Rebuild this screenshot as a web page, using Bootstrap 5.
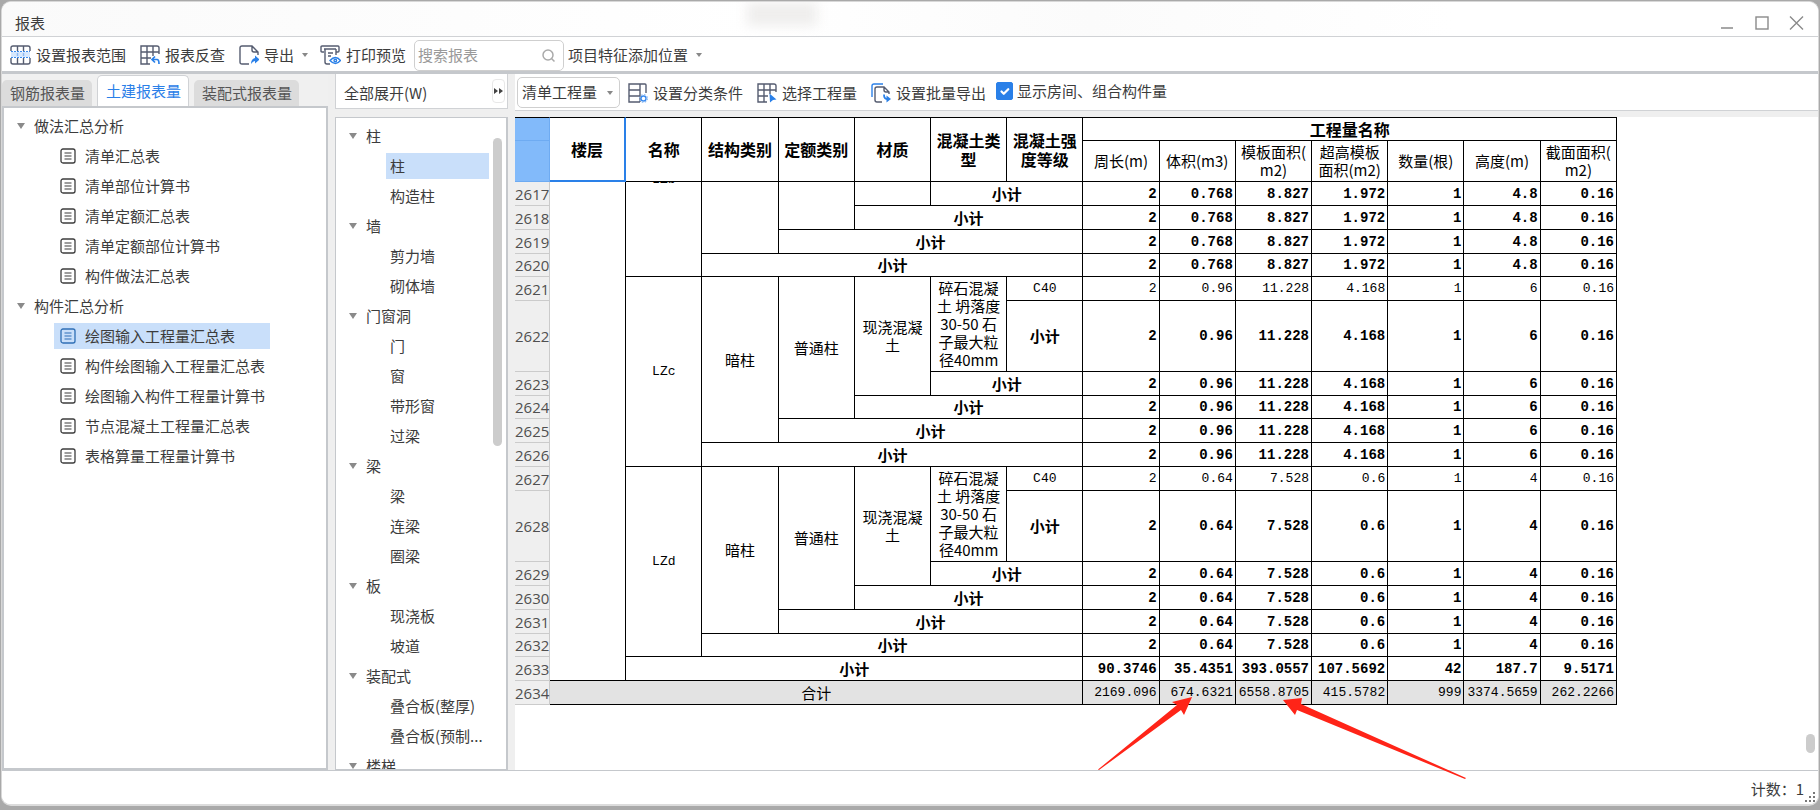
<!DOCTYPE html>
<html lang="zh-CN">
<head>
<meta charset="utf-8">
<meta name="viewport" content="width=device-width, initial-scale=1">
<title>报表</title>
<link href="https://cdn.jsdelivr.net/npm/bootstrap@5.3.0/dist/css/bootstrap.min.css" rel="stylesheet">
<style>
:root { --line:#d0d2d5; --edge:#c5c8cc; --ink:#3c3c3c; --accent:#2a80e8; --pick:#c9dffa; }
body { font-family:"Noto Sans CJK SC",sans-serif; font-size:15px; line-height:20px; color:var(--ink); background:#a9a9a9; }
svg { display:block; flex:none; }
a { color:inherit; text-decoration:none; }
.desktop { height:100vh; padding:1px 1px 4px; }
.app-window { border-radius:10px; border:1px solid #d8d8d8; border-bottom:2px solid #dcdcdc; background:#fff; overflow:hidden; }
.title-bar { height:35px; padding:8px 13px 0 13px; background:linear-gradient(90deg,#fafafa,#fff 42%,#fbfbfb 60%,#fff 80%); border-bottom:1px solid var(--line); position:relative; }
.title-haze { position:absolute; left:41%; top:0; width:70px; height:24px; background:#efeeed; filter:blur(6px); }
.win-btns { gap:19px; }
.tool { border:0; background:none; padding:0; color:inherit; display:flex; align-items:center; white-space:nowrap; }
.tool svg { margin-right:5px; }
.main-tools { height:37px; padding:2px 0 0 8px; border-bottom:3px solid var(--edge); }
.gap-tool { margin-left:14px; }
.search-box { width:150px; height:31px; border:1px solid #cfcfcf; border-radius:5px; padding:0 7px 0 3px; }
.search-box input { border:0; outline:0; min-width:0; width:100%; padding:0; color:#999; background:none; }
.search-box input::placeholder { color:#999; }
.caret { width:0; height:0; border:3px solid transparent; border-top:4px solid #888; border-bottom:0; flex:none; }
.work { background:#efefef; min-height:0; }
.side { width:326px; flex:none; }
.tabs { height:32px; gap:5px; background:#f0f0f0; }
.tabs button { border:0; background:#dcdcdc; color:#555; height:26px; padding:0 7px 0 8px; border-radius:5px 5px 0 0; white-space:nowrap; line-height:24px; }
.tabs button.on { background:#fff; color:var(--accent); height:31px; border:1px solid var(--line); border-bottom:0; line-height:30px; }
.tree-box { background:#fff; border:2px solid var(--edge); min-height:0; overflow:hidden; }
.tree { list-style:none; margin:0; padding:1px 0 0; }
.tree ul { list-style:none; margin:0; padding:0; }
.tree a { display:flex; align-items:center; height:26px; margin:4px 0; white-space:nowrap; }
.tree .branch { padding-left:13px; gap:9px; }
.branch::before { content:""; border:4px solid transparent; border-top:6px solid #8a8a8a; border-bottom:0; }
.side .leaf { margin-left:50px; padding:0 5px 0 6px; gap:9px; width:216px; }
.kinds { width:173px; margin:0 7px; flex:none; }
.kinds .leaf { margin-left:50px; padding-left:4px; width:103px; }
.leaf.on { background:var(--pick); }
.expand-box { height:35px; background:#fff; border:1px solid var(--line); border-top:0; padding:0 2px 0 8px; }
.more-btn { width:13px; height:24px; border:1px solid #e8e8e8; border-radius:4px; background:#fff; padding:0; }
.kinds .tree-box { margin-top:8px; border-width:1px 2px 1px 1px; position:relative; }
.thumb { position:absolute; width:9px; border-radius:5px; background:#ccc; }
.right-tools { height:37px; background:#fff; border-bottom:1px solid var(--line); padding-left:2px; }
.right-tools .tool { padding-top:2px; }
.scheme { width:103px; height:31px; border:1px solid #cfcfcf; border-radius:5px; padding:0 4px; appearance:none; color:inherit; background:#fff; }
.pick-wrap { position:relative; }
.pick-wrap .caret { position:absolute; right:7px; top:14px; pointer-events:none; }
.show-opt { gap:4px; margin-left:10px; padding-bottom:2px; white-space:nowrap; }
.show-opt .form-check-input { width:17px; height:18px; margin:0; border-radius:2px; }
.form-check-input:checked { background-color:var(--accent); border-color:var(--accent); }
.sheet { background:#fff; margin-top:6px; position:relative; min-height:0; }
.report { table-layout:fixed; width:1102px; border-collapse:separate; border-spacing:0; color:#000; line-height:18px; }
.report th, .report td { border:solid #000; border-width:0 1px 1px 0; padding:0 2px; text-align:center; vertical-align:middle; white-space:nowrap; height:24px; font-weight:400; }
.report thead tr:first-child th { border-top:1px solid #000; }
.report thead .big { font-size:16px; font-weight:700; line-height:19px; }
.report tr.sub-head th { height:41px; }
.report tbody .no { font-family:"Open Sans",sans-serif; background:#efefef; color:#505050; border-color:#cbcbcb; padding:0; line-height:20px; }
.report thead .corner { background:#82bafa; border-color:#6eabf2; border-top-color:#6eabf2; padding:0; }
.report .active-cell { border-right:2px solid var(--accent); border-bottom:2px solid var(--accent); }
.report .n { text-align:right; font-family:"Liberation Mono",monospace; font-size:13px; }
.report .s .n { font-weight:700; font-size:14px; }
.report .st { font-weight:700; }
.report .code { font-family:"Liberation Mono",monospace; font-size:13px; }
.report tbody tr:nth-child(4n) > * { height:23px; }
.report tbody tr.tall > * { height:71px; }
.report .total > td { background:#e3e3e3; }
.cut { height:3px; line-height:10px; }
.arrows { position:absolute; left:582px; top:579px; z-index:2; pointer-events:none; }
.status-bar { height:34px; border-top:1px solid var(--edge); padding:2px 14px 0; background:#fff; position:relative; }
.grip { position:absolute; right:2px; bottom:1px; }
</style>
</head>
<body>
<svg width="0" height="0" class="position-absolute" aria-hidden="true">
  <symbol id="doc" viewBox="0 0 16 16"><rect x="1" y="1" width="14" height="14" rx="2" fill="none" stroke="currentColor" stroke-width="1.3"/><path d="M4.5 5h7M4.5 8h7M4.5 11h7" stroke="currentColor" stroke-width="1.2"/></symbol>
</svg>
<div class="desktop">
<div class="app-window d-flex flex-column h-100">
  <header class="title-bar d-flex justify-content-between align-items-center flex-shrink-0">
    <div class="title-haze"></div>
    <span>报表</span>
    <div class="win-btns d-flex align-items-center">
      <button class="tool" aria-label="最小化"><svg class="m-0" width="16" height="16" stroke="#8a8a8a" stroke-width="1.4"><path d="M2 13h12"/></svg></button>
      <button class="tool" aria-label="最大化"><svg class="m-0" width="16" height="16" stroke="#8a8a8a" stroke-width="1.4" fill="none"><rect x="2" y="2" width="12" height="12"/></svg></button>
      <button class="tool" aria-label="关闭"><svg class="m-0" width="16" height="16" stroke="#8a8a8a" stroke-width="1.4"><path d="M1 1.500l13 13M14 1.500l-13 13"/></svg></button>
    </div>
  </header>

  <nav class="main-tools d-flex align-items-center flex-shrink-0">
    <button class="tool"><svg width="21" height="20" fill="none" stroke="#555c70" stroke-width="1.4"><path d="M1 6V3q0-2 2-2h15q2 0 2 2v3M1 13v4q0 2 2 2h15q2 0 2-2v-4M7.500 1v5M13.500 1v5M7.500 13v6M13.500 13v6"/><rect x="1" y="7" width="19" height="5" fill="#d7e8fd" stroke="none"/><path d="M1 6.500h19M1 12.500h19" stroke="#3b8cf0" stroke-width="1" stroke-dasharray="2 1"/><path d="M7.500 8v3M13.500 8v3" stroke="#8bb9f3"/></svg>设置报表范围</button>
    <button class="tool gap-tool"><svg width="20" height="20" fill="none" stroke="#555c70" stroke-width="1.4"><path d="M19 9V3q0-2-2-2H1v18h9M7 1v18M13 1v10M1 7h18M1 13h10"/><path d="M12 14.500h5q2 0 2 4.500M15 11.500l-3 3 3 3" stroke="#2a80e8" stroke-width="1.7"/></svg>报表反查</button>
    <button class="tool gap-tool"><svg width="20" height="20" fill="none" stroke="#555c70" stroke-width="1.4"><path d="M10 19H3q-2 0-2-2V3q0-2 2-2h10l6 6v3M13 1v4q0 2 2 2h4"/><path d="M12 19q0-5 4-6v-2.500l4.500 4-4.500 4V16q-2 0-4 3" fill="#2a80e8" stroke="none"/></svg>导出<span class="caret mx-2 ms-2"></span></button>
    <button class="tool ms-1"><svg width="21" height="20" fill="none" stroke="#555c70" stroke-width="1.4"><path d="M4 7H2q-1 0-1-1V2q0-1 1-1h16q1 0 1 1v4q0 1-1 1h-2M4 4h12M5 4v13q0 2 2 2h3M16 4v6M8 8h5M8 11h3"/><path d="M10 15.500q5.500-6 10.500 0-5 6-10.500 0z" stroke="#2a80e8"/><circle cx="15.300" cy="15.500" r="1.300" stroke="#2a80e8"/></svg>打印预览</button>
    <div class="search-box d-flex align-items-center ms-2"><input type="text" placeholder="搜索报表" aria-label="搜索报表"><svg width="15" height="15" fill="none" stroke="#aaa" stroke-width="1.5"><circle cx="7" cy="7" r="5"/><path d="M10.500 10.500l3 3"/></svg></div>
    <button class="tool ms-1">项目特征添加位置<span class="caret ms-2"></span></button>
  </nav>

  <main class="work d-flex flex-fill">
    <section class="side d-flex flex-column">
      <div class="tabs d-flex align-items-end flex-shrink-0">
        <button>钢筋报表量</button><button class="on">土建报表量</button><button>装配式报表量</button>
      </div>
      <div class="tree-box flex-fill">
        <ul class="tree">
          <li><a href="#" class="branch">做法汇总分析</a>
            <ul>
              <li><a href="#" class="leaf"><svg width="16" height="18"><use href="#doc"/></svg>清单汇总表</a></li>
              <li><a href="#" class="leaf"><svg width="16" height="18"><use href="#doc"/></svg>清单部位计算书</a></li>
              <li><a href="#" class="leaf"><svg width="16" height="18"><use href="#doc"/></svg>清单定额汇总表</a></li>
              <li><a href="#" class="leaf"><svg width="16" height="18"><use href="#doc"/></svg>清单定额部位计算书</a></li>
              <li><a href="#" class="leaf"><svg width="16" height="18"><use href="#doc"/></svg>构件做法汇总表</a></li>
            </ul></li>
          <li><a href="#" class="branch">构件汇总分析</a>
            <ul>
              <li><a href="#" class="leaf on"><svg width="16" height="18" color="#2f6fb5"><use href="#doc"/></svg>绘图输入工程量汇总表</a></li>
              <li><a href="#" class="leaf"><svg width="16" height="18"><use href="#doc"/></svg>构件绘图输入工程量汇总表</a></li>
              <li><a href="#" class="leaf"><svg width="16" height="18"><use href="#doc"/></svg>绘图输入构件工程量计算书</a></li>
              <li><a href="#" class="leaf"><svg width="16" height="18"><use href="#doc"/></svg>节点混凝土工程量汇总表</a></li>
              <li><a href="#" class="leaf"><svg width="16" height="18"><use href="#doc"/></svg>表格算量工程量计算书</a></li>
            </ul></li>
        </ul>
      </div>
    </section>

    <section class="kinds d-flex flex-column">
      <div class="expand-box d-flex align-items-center justify-content-between flex-shrink-0">
        <button class="tool pt-1">全部展开(W)</button>
        <button class="more-btn" aria-label="更多"><svg width="11" height="8" fill="#444"><path d="M1 1l4 3-4 3zM6 1l4 3-4 3z"/></svg></button>
      </div>
      <div class="tree-box flex-fill">
        <ul class="tree">
          <li><a href="#" class="branch">柱</a><ul><li><a href="#" class="leaf on">柱</a></li><li><a href="#" class="leaf">构造柱</a></li></ul></li>
          <li><a href="#" class="branch">墙</a><ul><li><a href="#" class="leaf">剪力墙</a></li><li><a href="#" class="leaf">砌体墙</a></li></ul></li>
          <li><a href="#" class="branch">门窗洞</a><ul><li><a href="#" class="leaf">门</a></li><li><a href="#" class="leaf">窗</a></li><li><a href="#" class="leaf">带形窗</a></li><li><a href="#" class="leaf">过梁</a></li></ul></li>
          <li><a href="#" class="branch">梁</a><ul><li><a href="#" class="leaf">梁</a></li><li><a href="#" class="leaf">连梁</a></li><li><a href="#" class="leaf">圈梁</a></li></ul></li>
          <li><a href="#" class="branch">板</a><ul><li><a href="#" class="leaf">现浇板</a></li><li><a href="#" class="leaf">坡道</a></li></ul></li>
          <li><a href="#" class="branch">装配式</a><ul><li><a href="#" class="leaf">叠合板(整厚)</a></li><li><a href="#" class="leaf">叠合板(预制...</a></li></ul></li>
          <li><a href="#" class="branch">楼梯</a></li>
        </ul>
        <div class="thumb" style="right:4px;top:20px;height:308px"></div>
      </div>
    </section>

    <section class="flex-fill d-flex flex-column">
      <div class="right-tools d-flex align-items-center flex-shrink-0">
        <div class="pick-wrap"><select class="scheme" aria-label="工程量方案"><option>清单工程量</option></select><span class="caret"></span></div>
        <button class="tool ms-2"><svg width="20" height="20" fill="none" stroke="#555c70" stroke-width="1.4"><path d="M12 19H1V1h11v18M1 7h11M1 13h11M12 1h5q1 0 1 1v8"/><circle cx="15.500" cy="15.500" r="2.500" stroke="#3b8cf0"/><circle cx="15.500" cy="15.500" r="3.800" stroke="#8bb9f3" stroke-dasharray="1.500 1.500"/></svg>设置分类条件</button>
        <button class="tool gap-tool"><svg width="20" height="20" fill="none" stroke="#555c70" stroke-width="1.4"><path d="M19 9V3q0-2-2-2H1v18h9M7 1v18M13 1v10M1 7h18M1 13h10"/><path d="M12.500 10.500l7 6-3.500.5-3 2.500z" fill="#2a80e8" stroke="none"/></svg>选择工程量</button>
        <button class="tool gap-tool"><svg width="20" height="20" fill="none" stroke="#555c70" stroke-width="1.4"><path d="M1 14V3q0-2 2-2h9" stroke="#2a80e8"/><path d="M11 19H6q-2 0-2-2V6q0-2 2-2h7l5 5v2M13 4v3q0 2 2 2h3"/><path d="M13 11.500q0 4.500 3 4.500" stroke="#2a80e8" stroke-width="1.800"/><path d="M15.500 12.500v7l4.500-3.500z" stroke="none" fill="#2a80e8"/></svg>设置批量导出</button>
        <label class="show-opt d-flex align-items-center"><input class="form-check-input" type="checkbox" checked>显示房间、组合构件量</label>
      </div>
      <div class="sheet flex-fill">
        <table class="report">
          <colgroup><col style="width:35px"><col span="14"></colgroup>
          <thead>
            <tr><th class="corner"></th><th rowspan="2" class="big active-cell">楼层</th><th rowspan="2" class="big">名称</th><th rowspan="2" class="big">结构类别</th><th rowspan="2" class="big">定额类别</th><th rowspan="2" class="big">材质</th><th rowspan="2" class="big">混凝土类<br>型</th><th rowspan="2" class="big">混凝土强<br>度等级</th><th colspan="7" class="big">工程量名称</th></tr>
            <tr class="sub-head"><th class="corner"></th><th>周长(m)</th><th>体积(m3)</th><th>模板面积(<br>m2)</th><th>超高模板<br>面积(m2)</th><th>数量(根)</th><th>高度(m)</th><th>截面面积(<br>m2)</th></tr>
          </thead>
          <tbody>
            <tr class="s"><th class="no">2617</th><td rowspan="17"></td><td rowspan="4" class="align-top"><div class="cut overflow-hidden d-flex align-items-end justify-content-center code">LZb</div></td><td rowspan="3"></td><td rowspan="2"></td><td></td><td colspan="2" class="st">小计</td><td class="n">2</td><td class="n">0.768</td><td class="n">8.827</td><td class="n">1.972</td><td class="n">1</td><td class="n">4.8</td><td class="n">0.16</td></tr>
            <tr class="s"><th class="no">2618</th><td colspan="3" class="st">小计</td><td class="n">2</td><td class="n">0.768</td><td class="n">8.827</td><td class="n">1.972</td><td class="n">1</td><td class="n">4.8</td><td class="n">0.16</td></tr>
            <tr class="s"><th class="no">2619</th><td colspan="4" class="st">小计</td><td class="n">2</td><td class="n">0.768</td><td class="n">8.827</td><td class="n">1.972</td><td class="n">1</td><td class="n">4.8</td><td class="n">0.16</td></tr>
            <tr class="s"><th class="no">2620</th><td colspan="5" class="st">小计</td><td class="n">2</td><td class="n">0.768</td><td class="n">8.827</td><td class="n">1.972</td><td class="n">1</td><td class="n">4.8</td><td class="n">0.16</td></tr>

            <tr><th class="no">2621</th><td rowspan="6" class="code">LZc</td><td rowspan="5">暗柱</td><td rowspan="4">普通柱</td><td rowspan="3">现浇混凝<br>土</td><td rowspan="2">碎石混凝<br>土 坍落度<br>30-50 石<br>子最大粒<br>径40mm</td><td class="code">C40</td><td class="n">2</td><td class="n">0.96</td><td class="n">11.228</td><td class="n">4.168</td><td class="n">1</td><td class="n">6</td><td class="n">0.16</td></tr>
            <tr class="s tall"><th class="no">2622</th><td class="st">小计</td><td class="n">2</td><td class="n">0.96</td><td class="n">11.228</td><td class="n">4.168</td><td class="n">1</td><td class="n">6</td><td class="n">0.16</td></tr>
            <tr class="s"><th class="no">2623</th><td colspan="2" class="st">小计</td><td class="n">2</td><td class="n">0.96</td><td class="n">11.228</td><td class="n">4.168</td><td class="n">1</td><td class="n">6</td><td class="n">0.16</td></tr>
            <tr class="s"><th class="no">2624</th><td colspan="3" class="st">小计</td><td class="n">2</td><td class="n">0.96</td><td class="n">11.228</td><td class="n">4.168</td><td class="n">1</td><td class="n">6</td><td class="n">0.16</td></tr>
            <tr class="s"><th class="no">2625</th><td colspan="4" class="st">小计</td><td class="n">2</td><td class="n">0.96</td><td class="n">11.228</td><td class="n">4.168</td><td class="n">1</td><td class="n">6</td><td class="n">0.16</td></tr>
            <tr class="s"><th class="no">2626</th><td colspan="5" class="st">小计</td><td class="n">2</td><td class="n">0.96</td><td class="n">11.228</td><td class="n">4.168</td><td class="n">1</td><td class="n">6</td><td class="n">0.16</td></tr>

            <tr><th class="no">2627</th><td rowspan="6" class="code">LZd</td><td rowspan="5">暗柱</td><td rowspan="4">普通柱</td><td rowspan="3">现浇混凝<br>土</td><td rowspan="2">碎石混凝<br>土 坍落度<br>30-50 石<br>子最大粒<br>径40mm</td><td class="code">C40</td><td class="n">2</td><td class="n">0.64</td><td class="n">7.528</td><td class="n">0.6</td><td class="n">1</td><td class="n">4</td><td class="n">0.16</td></tr>
            <tr class="s tall"><th class="no">2628</th><td class="st">小计</td><td class="n">2</td><td class="n">0.64</td><td class="n">7.528</td><td class="n">0.6</td><td class="n">1</td><td class="n">4</td><td class="n">0.16</td></tr>
            <tr class="s"><th class="no">2629</th><td colspan="2" class="st">小计</td><td class="n">2</td><td class="n">0.64</td><td class="n">7.528</td><td class="n">0.6</td><td class="n">1</td><td class="n">4</td><td class="n">0.16</td></tr>
            <tr class="s"><th class="no">2630</th><td colspan="3" class="st">小计</td><td class="n">2</td><td class="n">0.64</td><td class="n">7.528</td><td class="n">0.6</td><td class="n">1</td><td class="n">4</td><td class="n">0.16</td></tr>
            <tr class="s"><th class="no">2631</th><td colspan="4" class="st">小计</td><td class="n">2</td><td class="n">0.64</td><td class="n">7.528</td><td class="n">0.6</td><td class="n">1</td><td class="n">4</td><td class="n">0.16</td></tr>
            <tr class="s"><th class="no">2632</th><td colspan="5" class="st">小计</td><td class="n">2</td><td class="n">0.64</td><td class="n">7.528</td><td class="n">0.6</td><td class="n">1</td><td class="n">4</td><td class="n">0.16</td></tr>
            <tr class="s"><th class="no">2633</th><td colspan="6" class="st">小计</td><td class="n">90.3746</td><td class="n">35.4351</td><td class="n">393.0557</td><td class="n">107.5692</td><td class="n">42</td><td class="n">187.7</td><td class="n">9.5171</td></tr>
            <tr class="total"><th class="no">2634</th><td colspan="7">合计</td><td class="n">2169.096</td><td class="n">674.6321</td><td class="n">6558.8705</td><td class="n">415.5782</td><td class="n">999</td><td class="n">3374.5659</td><td class="n">262.2266</td></tr>
          </tbody>
        </table>
        <svg class="arrows" width="372" height="84" fill="#ff2418" aria-hidden="true"><path d="M1 73.500L80 9 75 6 95 1 87 19 84 14 2 74z"/><path d="M369 82L204 8 205 2 186 4 198 19 200 14 368 83z"/></svg>
        <div class="thumb" style="right:3px;bottom:17px;height:19px"></div>
      </div>
    </section>
  </main>

  <footer class="status-bar d-flex align-items-center justify-content-end flex-shrink-0">
    <span>计数：1</span>
    <svg class="grip" width="11" height="11" fill="#777"><path d="M8 0h2v2H8zM8 4h2v2H8zM8 8h2v2H8zM4 4h2v2H4zM4 8h2v2H4zM0 8h2v2H0z"/></svg>
  </footer>
</div>
</div>
<script src="https://cdn.jsdelivr.net/npm/bootstrap@5.3.0/dist/js/bootstrap.bundle.min.js"></script>
</body>
</html>
